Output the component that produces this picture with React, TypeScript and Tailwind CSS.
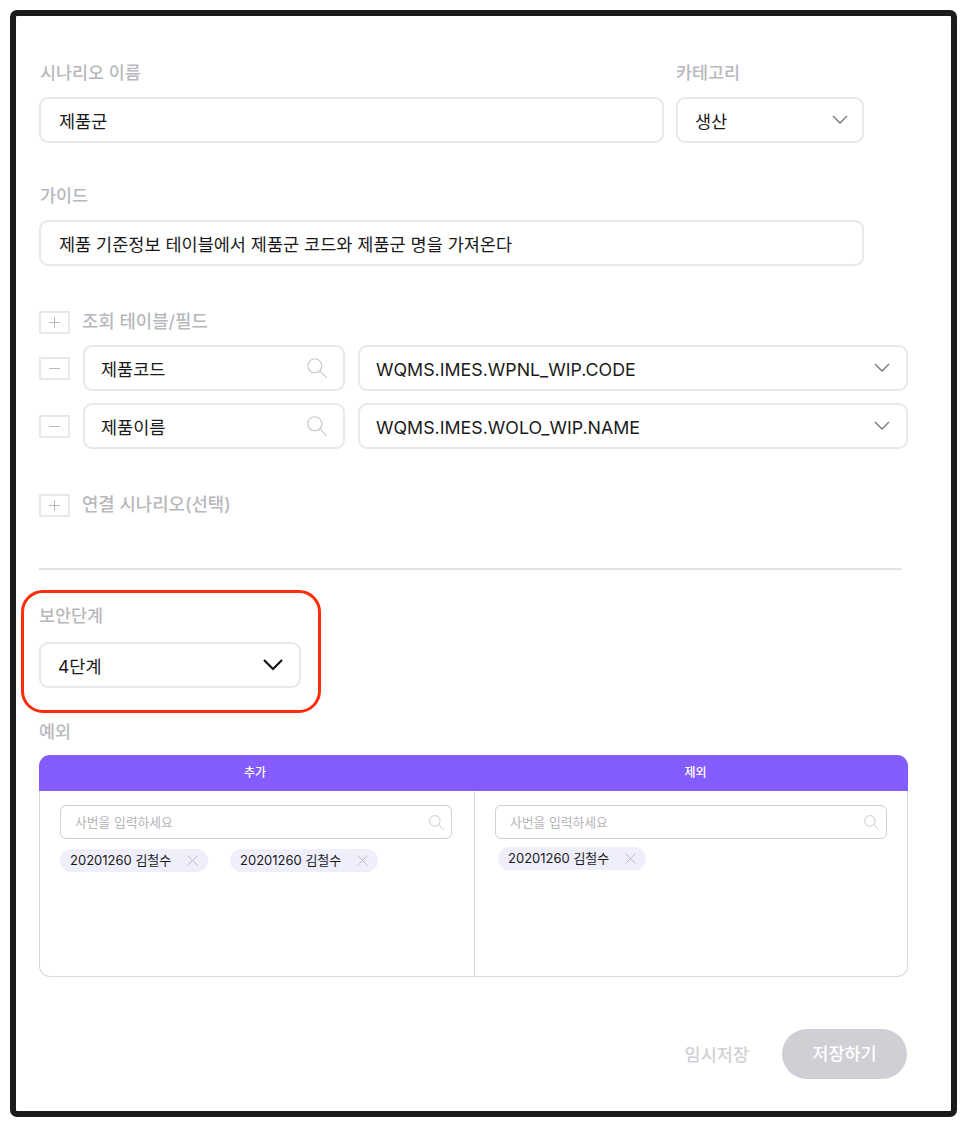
import { Plus, Minus } from 'lucide-react';

const labelClass = 'h-6 text-[17.4px] leading-6 font-medium text-[#b8b8bc]';
const fieldClass = 'h-[46px] flex items-center justify-between bg-white border-2 border-[#e8e8eb] rounded-[9px] text-[17.5px] text-[#1a1a1a]';

function SearchIcon({ size, color }: { size: number; color: string }) {
  return (
    <svg width={size} height={size} viewBox="0 0 20 20" fill="none" stroke={color} strokeWidth="1.1">
      <circle cx="7.8" cy="7.8" r="7" />
      <line x1="12.8" y1="12.8" x2="19.6" y2="19.6" />
    </svg>
  );
}

function Chevron({ width, color, weight }: { width: number; color: string; weight: number }) {
  return (
    <svg width={width} height={width * 0.6} viewBox={`0 0 ${width} ${width * 0.6}`} fill="none" stroke={color} strokeWidth={weight}>
      <polyline points={`1,1 ${width / 2},${width / 2} ${width - 1},1`} />
    </svg>
  );
}

function CloseIcon() {
  return (
    <svg width="11" height="11" viewBox="0 0 11 11" fill="none" stroke="#bcbcc4" strokeWidth="1">
      <line x1="0.5" y1="0.5" x2="10.5" y2="10.5" />
      <line x1="10.5" y1="0.5" x2="0.5" y2="10.5" />
    </svg>
  );
}

function SquareButton({ minus }: { minus?: boolean }) {
  return (
    <div className="w-[31px] h-[23px] shrink-0 flex items-center justify-center border-2 border-[#e8e8eb]">
      {minus ? (
        <Minus className="w-[17px] h-[17px] text-[#a9a9ae]" strokeWidth={1.2} />
      ) : (
        <Plus className="w-[17px] h-[17px] text-[#a9a9ae]" strokeWidth={1.2} />
      )}
    </div>
  );
}

function FieldRow({ name, value, className }: { name: string; value: string; className?: string }) {
  return (
    <div className={`flex items-center ${className ?? ''}`}>
      <SquareButton minus />
      <div className={`${fieldClass} w-[262px] ml-[13px] pl-[16px] pr-[16px]`}>
        <span className="pt-[5px]">{name}</span>
        <SearchIcon size={20} color="#c6c6ca" />
      </div>
      <div className={`${fieldClass} w-[550px] ml-[13px] pl-[16px] pr-[16px]`}>
        <span className="pt-[5px] text-[17.8px]">{value}</span>
        <Chevron width={16} color="#77777c" weight={1.3} />
      </div>
    </div>
  );
}

function Chip({ className }: { className?: string }) {
  return (
    <div className={`w-[148px] h-[23px] flex items-center justify-between pl-[10px] pr-[10px] rounded-full bg-[#efeefb] text-[13px] text-[#1a1a1a] ${className ?? ''}`}>
      <span>20201260 김철수</span>
      <CloseIcon />
    </div>
  );
}

function SearchBox({ className }: { className?: string }) {
  return (
    <div className={`w-[392px] h-[34px] flex items-center justify-between pl-[14px] pr-[7px] border border-[#cfcfd4] rounded-[6px] text-[12.8px] text-[#b4b4b9] ${className ?? ''}`}>
      <span className="pt-[2px]">사번을 입력하세요</span>
      <SearchIcon size={15} color="#c0c0c5" />
    </div>
  );
}

export default function App() {
  return (
    <div className="w-[966px] h-[1126px] bg-white pt-[10px] pl-[10px] font-['Inter','Noto_Sans_CJK_KR',sans-serif]">
      <div className="w-[947px] h-[1107px] border-[6px] border-[#1b1b1b] rounded-[7px] bg-white pl-[23px] pt-[45px]">
        <div className="flex">
          <div className="w-[625px]">
            <div className={`${labelClass} pl-[1px]`}>시나리오 이름</div>
            <div className={`${fieldClass} mt-3 pl-[18px]`}>
              <span className="pt-[5px]">제품군</span>
            </div>
          </div>
          <div className="w-[188px] ml-[12px]">
            <div className={labelClass}>카테고리</div>
            <div className={`${fieldClass} mt-3 pl-[17px] pr-[14px]`}>
              <span className="pt-[5px]">생산</span>
              <Chevron width={16} color="#77777c" weight={1.3} />
            </div>
          </div>
        </div>

        <div className={`${labelClass} pl-[1px] mt-[41px]`}>가이드</div>
        <div className={`${fieldClass} w-[825px] mt-3 pl-[18px]`}>
          <span className="pt-[5px]">제품 기준정보 테이블에서 제품군 코드와 제품군 명을 가져온다</span>
        </div>

        <div className="flex items-center mt-[44px]">
          <SquareButton />
          <span className="ml-[12px] h-6 text-[17.8px] leading-6 font-medium text-[#b8b8bc]">조회 테이블/필드</span>
        </div>
        <FieldRow name="제품코드" value="WQMS.IMES.WPNL_WIP.CODE" className="mt-[11px]" />
        <FieldRow name="제품이름" value="WQMS.IMES.WOLO_WIP.NAME" className="mt-3" />

        <div className="flex items-center mt-[44px]">
          <SquareButton />
          <span className="ml-[12px] h-6 text-[17.8px] leading-6 font-medium text-[#b8b8bc]">연결 시나리오(선택)</span>
        </div>

        <div className="w-[863px] h-[2px] bg-[#e4e4e6] mt-[51px]" />

        <div className="w-[300px] h-[123px] -ml-[18px] mt-[20px] border-[3px] border-[#fb2d0a] rounded-[22px] pl-[15px] pt-[11px]">
          <div className={labelClass}>보안단계</div>
          <div className={`${fieldClass} w-[262px] mt-[14px] pl-[17px] pr-[16px]`}>
            <span className="pt-[5px]">4단계</span>
            <Chevron width={20} color="#111111" weight={2.2} />
          </div>
        </div>

        <div className={`${labelClass} mt-[7px]`}>예외</div>

        <div className="w-[869px] mt-[11px]">
          <div className="h-[36px] flex bg-[#845cff] rounded-t-[11px] text-[12px] font-medium text-white">
            <div className="w-[432px] flex items-center justify-center">추가</div>
            <div className="flex-1 pl-[12px] flex items-center justify-center">제외</div>
          </div>
          <div className="h-[186px] flex border border-t-0 border-[#d9d9dd] rounded-b-[11px]">
            <div className="w-[435px] border-r border-[#d9d9dd] pl-[20px] pt-[14px]">
              <SearchBox />
              <div className="flex mt-[10px]">
                <Chip />
                <Chip className="ml-[22px]" />
              </div>
            </div>
            <div className="flex-1 pl-[20px] pt-[14px]">
              <SearchBox />
              <Chip className="mt-[8px] ml-[3px]" />
            </div>
          </div>
        </div>

        <div className="w-[868px] flex items-center justify-end mt-[52px]">
          <span className="pt-[3px] text-[17.5px] font-medium text-[#d1d1d5]">임시저장</span>
          <button className="w-[125px] h-[50px] ml-[33px] rounded-full bg-[#cfcfd5] text-[17.5px] font-medium text-white">저장하기</button>
        </div>
      </div>
    </div>
  );
}
